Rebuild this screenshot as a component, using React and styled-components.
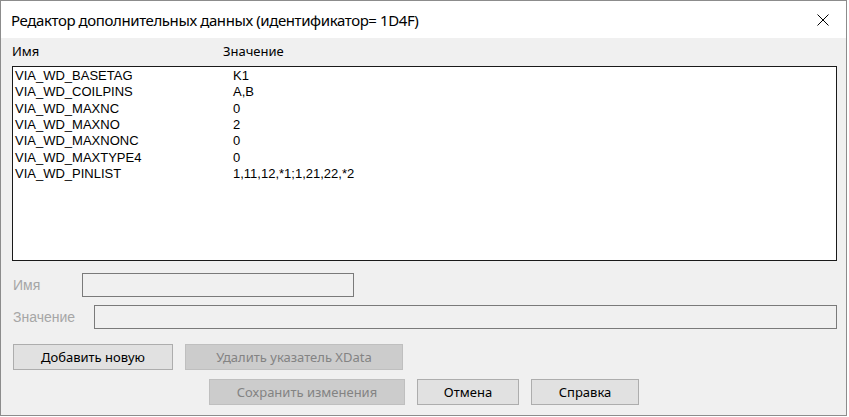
import React from "react";
import styled, { createGlobalStyle } from "styled-components";

const GlobalStyle = createGlobalStyle`
  html, body {
    margin: 0;
    padding: 0;
    background: #ffffff;
  }
`;

const StyledWindow = styled.div`
  width: 847px;
  height: 416px;
  box-sizing: border-box;
  border: 1px solid #8c8c8c;
  display: flex;
  flex-direction: column;
  font-family: "Noto Sans", "Open Sans", sans-serif;
  color: #000;
`;

const StyledTitleBar = styled.div`
  height: 37px;
  background: #ffffff;
  display: flex;
  align-items: center;
  justify-content: space-between;
  padding: 0 17px 0 10px;
`;

const StyledTitle = styled.span`
  font-size: 15px;
  letter-spacing: -0.4px;
`;

const StyledBody = styled.div`
  flex: 1;
  background: #f0f0f0;
  padding: 0 9px 0 11px;
  display: flex;
  flex-direction: column;
`;

const StyledHeader = styled.div`
  display: grid;
  grid-template-columns: 211px 1fr;
  font-size: 13px;
  line-height: 16px;
  padding-top: 5px;
  margin-bottom: 7px;
`;

const StyledList = styled.div`
  height: 195px;
  box-sizing: border-box;
  border: 1px solid #1a1a1a;
  background: #ffffff;
  padding: 1px 0 0 2px;
  font-family: "Liberation Sans", Arial, sans-serif;
  font-size: 13px;
`;

const StyledRow = styled.div`
  display: grid;
  grid-template-columns: 218px 1fr;
  height: 16.33px;
  line-height: 16px;
`;

const StyledField = styled.div`
  display: flex;
  align-items: center;
  margin-top: ${(p) => p.$gap}px;
`;

const StyledLabel = styled.span`
  width: ${(p) => p.$width}px;
  padding-left: 1px;
  font-family: "Liberation Sans", Arial, sans-serif;
  font-size: 14px;
  color: #a6a6a6;
`;

const StyledInput = styled.div`
  width: ${(p) => p.$width}px;
  height: 24px;
  box-sizing: border-box;
  border: 1px solid #7a7a7a;
  background: #f0f0f0;
`;

const StyledButtonRow = styled.div`
  display: flex;
  gap: 12px;
  margin-top: ${(p) => p.$gap}px;
  padding-left: ${(p) => p.$indent}px;
`;

const StyledButton = styled.button`
  width: ${(p) => p.$width}px;
  height: 26px;
  box-sizing: border-box;
  border: 1px solid ${(p) => (p.disabled ? "#bfbfbf" : "#adadad")};
  background: ${(p) => (p.disabled ? "#cccccc" : "#e1e1e1")};
  color: ${(p) => (p.disabled ? "#838383" : "#000000")};
  font-family: "Noto Sans", "Open Sans", sans-serif;
  font-size: 13px;
  padding: 0;
`;

const rows = [
  ["VIA_WD_BASETAG", "K1"],
  ["VIA_WD_COILPINS", "A,B"],
  ["VIA_WD_MAXNC", "0"],
  ["VIA_WD_MAXNO", "2"],
  ["VIA_WD_MAXNONC", "0"],
  ["VIA_WD_MAXTYPE4", "0"],
  ["VIA_WD_PINLIST", "1,11,12,*1;1,21,22,*2"],
];

const CloseIcon = () => (
  <svg width="12" height="12" viewBox="0 0 12 12">
    <path d="M0.5 0.5 L11.5 11.5 M11.5 0.5 L0.5 11.5" stroke="#000" strokeWidth="1" />
  </svg>
);

const App = () => (
  <>
    <GlobalStyle />
    <StyledWindow>
      <StyledTitleBar>
        <StyledTitle>Редактор дополнительных данных (идентификатор= 1D4F)</StyledTitle>
        <CloseIcon />
      </StyledTitleBar>
      <StyledBody>
        <StyledHeader>
          <span>Имя</span>
          <span>Значение</span>
        </StyledHeader>
        <StyledList>
          {rows.map(([name, value]) => (
            <StyledRow key={name}>
              <span>{name}</span>
              <span>{value}</span>
            </StyledRow>
          ))}
        </StyledList>
        <StyledField $gap={12}>
          <StyledLabel $width={69}>Имя</StyledLabel>
          <StyledInput $width={272} />
        </StyledField>
        <StyledField $gap={8}>
          <StyledLabel $width={81}>Значение</StyledLabel>
          <StyledInput $width={744} />
        </StyledField>
        <StyledButtonRow $gap={15} $indent={1}>
          <StyledButton $width={160}>Добавить новую</StyledButton>
          <StyledButton $width={218} disabled>
            Удалить указатель XData
          </StyledButton>
        </StyledButtonRow>
        <StyledButtonRow $gap={9} $indent={197}>
          <StyledButton $width={196} disabled>
            Сохранить изменения
          </StyledButton>
          <StyledButton $width={102}>Отмена</StyledButton>
          <StyledButton $width={108}>Справка</StyledButton>
        </StyledButtonRow>
      </StyledBody>
    </StyledWindow>
  </>
);

export default App;
